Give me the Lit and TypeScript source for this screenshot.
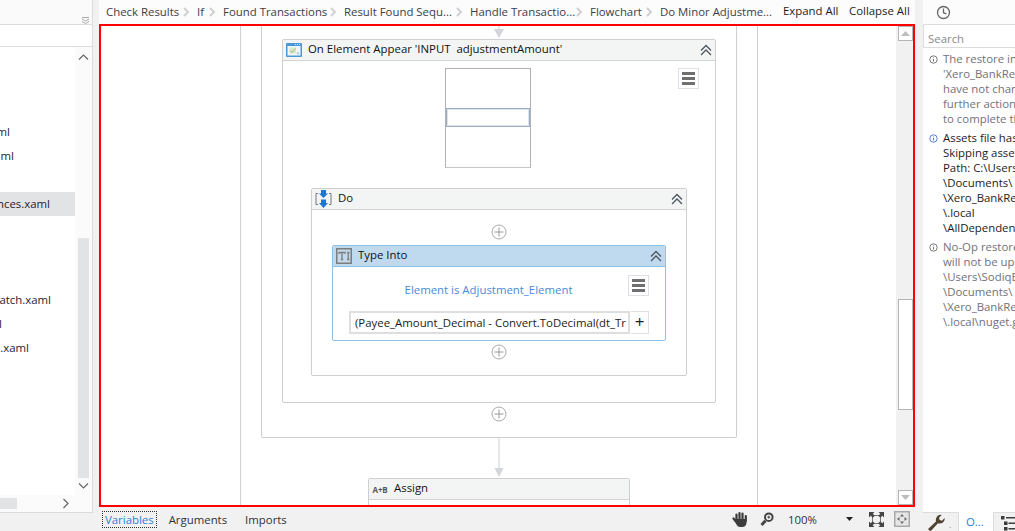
import { LitElement, html, css, svg } from 'lit';
import { customElement } from 'lit/decorators.js';

const crumbs = [
  ['Check Results', 106],
  ['If', 197],
  ['Found Transactions', 223],
  ['Result Found Sequ...', 344],
  ['Handle Transactio...', 470],
  ['Flowchart', 590],
  ['Do Minor Adjustme...', 660],
] as const;

const files = [
  { text: 'ml', end: 10, top: 0 },
  { text: 'ml', end: 14, top: 0 },
  { text: 'nces.xaml', end: 50, top: 24, selected: true },
  { text: 'atch.xaml', end: 51, top: 72 },
  { text: 'l', end: 2, top: 0 },
  { text: '.xaml', end: 29, top: 0 },
];

const messages = [
  { info: false, lines: ['The restore inputs', "'Xero_BankReconciliation'", 'have not changed', 'further actions', 'to complete the'] },
  { info: true, lines: ['Assets file has', 'Skipping assets', 'Path: C:\\Users', '\\Documents\\', '\\Xero_BankReconciliation', '\\.local', '\\AllDependencies'] },
  { info: false, lines: ['No-Op restore', 'will not be updated', '\\Users\\SodiqB', '\\Documents\\', '\\Xero_BankReconciliation', '\\.local\\nuget.g'] },
];

const collapse = svg`<svg class="chev" width="14" height="12" viewBox="0 0 14 12" fill="none" stroke="#4d5560" stroke-width="1.3"><path d="M2 6.5 7 1.5l5 5M2 11l5-5 5 5"/></svg>`;

const addBtn = html`<svg class="add" width="16" height="16" viewBox="0 0 16 16" fill="#fff" stroke="#a9a9a9"><circle cx="8" cy="8" r="7"/><path d="M8 3.5v9M3.5 8h9" stroke="#9a9a9a"/></svg>`;

const menuBtn = html`<div class="menu"><i></i><i></i><i></i></div>`;

@customElement('app-root')
export class AppRoot extends LitElement {
  static styles = css`
    :host {
      display: block;
      width: 1015px;
      height: 531px;
      overflow: hidden;
      font-family: 'Open Sans', 'Noto Sans', sans-serif;
      font-size: 11.4px;
      color: #1c1c1c;
      background: #f1f1f1;
    }
    .app {
      display: flex;
      height: 531px;
    }

    /* left project panel */
    .left {
      width: 92px;
      height: 512px;
      flex: none;
      background: #fff;
      border-right: 1px solid #dcdcdc;
      border-bottom: 1px solid #dcdcdc;
      display: flex;
      flex-direction: column;
      margin-right: 6px;
    }
    .left-top {
      height: 25px;
      box-sizing: border-box;
      background: #fafafa;
      border-bottom: 1px solid #dcdcdc;
      display: flex;
      justify-content: flex-end;
      padding: 17px 3px 0 0;
    }
    .left-search {
      height: 22px;
      box-sizing: border-box;
      border-bottom: 1px solid #dcdcdc;
    }
    .left-main {
      flex: 1;
      display: flex;
      min-height: 0;
    }
    .tree {
      width: 75px;
      padding-top: 73px;
      overflow: hidden;
    }
    .file {
      height: 24px;
      line-height: 24px;
      white-space: nowrap;
      display: flex;
      justify-content: flex-end;
      color: #1d2430;
    }
    .file.selected {
      background: #e2e3e5;
    }
    .vscroll {
      width: 17px;
      background: #fbfbfb;
      display: flex;
      flex-direction: column;
      align-items: center;
      padding-top: 7px;
      box-sizing: border-box;
    }
    .vscroll .thumb {
      width: 11px;
      height: 240px;
      margin: 178px 0 5px;
      background: #e2e3e5;
    }
    .hscroll {
      height: 17px;
      display: flex;
      align-items: center;
      justify-content: space-between;
      background: #fbfbfb;
      padding-right: 23px;
    }
    .hscroll .thumb {
      width: 17px;
      height: 11px;
      background: #e2e3e5;
    }

    /* centre */
    .center {
      width: 816px;
      flex: none;
      display: flex;
      flex-direction: column;
    }
    .crumbs {
      height: 24px;
      position: relative;
      background: #fcfcfc;
      color: #3b4048;
    }
    .crumb {
      position: absolute;
      top: 3px;
      line-height: 18px;
      white-space: nowrap;
    }
    .sep {
      position: absolute;
      top: 7px;
    }
    .crumb.act {
      top: 2px;
      color: #1c1c1c;
    }
    .canvas {
      height: 483px;
      box-sizing: border-box;
      border: 2px solid #f00;
      background: #fff;
      display: flex;
      overflow: hidden;
    }
    .flow {
      flex: 1;
      padding-left: 139px;
      min-width: 0;
    }
    .sequence {
      width: 518px;
      height: 100%;
      box-sizing: border-box;
      border-left: 1px solid #cfd0d4;
      border-right: 1px solid #cfd0d4;
      display: flex;
      flex-direction: column;
      align-items: center;
    }
    .flowchart {
      width: 476px;
      box-sizing: border-box;
      border: 1px solid #cfcfcf;
      border-top: none;
      border-radius: 0 0 2px 2px;
      display: flex;
      flex-direction: column;
      align-items: center;
      height: 412px;
      flex: none;
    }
    .arrow-short {
      height: 13px;
      flex: none;
      display: block;
    }
    .card {
      box-sizing: border-box;
      border: 1px solid #cfcfcf;
      border-radius: 2px;
      background: #fff;
      flex: none;
    }
    .head {
      height: 21px;
      box-sizing: border-box;
      background: #f3f5f4;
      border-bottom: 1px solid #d4d4d4;
      display: flex;
      align-items: center;
      gap: 6px;
      padding: 0 3px;
      white-space: pre;
      color: #111;
    }
    .head .title {
      padding-bottom: 4px;
    }
    .head .chev {
      margin-left: auto;
      margin-right: -1px;
    }
    .appear {
      width: 434px;
      height: 364px;
    }
    .appear-body {
      display: flex;
      align-items: flex-start;
      padding: 7px 16px 0 162px;
    }
    .target {
      width: 86px;
      height: 100px;
      box-sizing: border-box;
      border: 1px solid #b0b0b0;
      border-bottom-color: #c8c8c8;
      padding-top: 39px;
    }
    .target div {
      height: 19px;
      box-sizing: border-box;
      border: 1px solid #9ab0c8;
      outline: 1px solid #dde3ea;
      outline-offset: -2px;
    }
    .menu {
      width: 21px;
      height: 21px;
      box-sizing: border-box;
      border: 1px solid #dcdfe6;
      display: flex;
      flex-direction: column;
      justify-content: center;
      gap: 2px;
      padding: 0 3px;
      margin-left: auto;
      background: #fff;
    }
    .menu i {
      display: block;
      height: 3px;
      background: #6f6f6f;
    }
    .do {
      width: 376px;
      height: 188px;
      margin: 20px 0 0 28px;
      display: flex;
      flex-direction: column;
    }
    .do-body {
      display: flex;
      flex-direction: column;
      align-items: center;
      padding-top: 14px;
    }
    .add {
      display: block;
      flex: none;
    }
    .type {
      width: 334px;
      height: 96px;
      margin-top: 5px;
      border-color: #8fc1e6;
      margin-bottom: 3px;
    }
    .type .head {
      background: #bfdaee;
      border-bottom-color: #8fc1e6;
    }
    .type-row {
      display: flex;
      padding: 8px 16px 0 0;
      height: 28px;
      align-items: flex-start;
    }
    .link {
      flex: 1;
      text-align: center;
      padding: 7px 0 0 16px;
      box-sizing: border-box;
      color: #4a8ad8;
      line-height: 16px;
    }
    .expr {
      display: flex;
      margin: 8px 16px 0;
      height: 23px;
    }
    .expr .field {
      flex: 1;
      min-width: 0;
      box-sizing: border-box;
      border: 2px solid #dedede;
      padding: 0 4px;
      line-height: 19px;
      white-space: nowrap;
      overflow: hidden;
    }
    .expr .plus {
      width: 18px;
      box-sizing: border-box;
      border: 1px solid #dcdfe6;
      border-left: none;
      margin-left: 1px;
      text-align: center;
      font-size: 17px;
      line-height: 19px;
    }
    .after {
      height: 40px;
      flex: none;
      display: block;
    }
    .assign {
      width: 262px;
      height: 40px;
    }
    .ab {
      font-size: 8px;
      font-weight: 700;
      color: #555;
      width: 16px;
      text-align: center;
      letter-spacing: -0.2px;
    }
    .cscroll {
      width: 17px;
      flex: none;
      background: #f1f1f1;
      display: flex;
      flex-direction: column;
      box-sizing: border-box;
      padding-left: 2px;
    }
    .cscroll .btn {
      width: 15px;
      height: 15px;
      box-sizing: border-box;
      background: #fff;
      border: 1px solid #b5b5b5;
      display: flex;
      align-items: center;
      justify-content: center;
      flex: none;
    }
    .cscroll .thumb {
      width: 15px;
      height: 111px;
      box-sizing: border-box;
      background: #fff;
      border: 1px solid #b5b5b5;
      margin: 258px 0 80px;
      flex: none;
    }
    .bottom {
      height: 24px;
      display: flex;
      align-items: center;
      padding: 0 3px;
      color: #2b3340;
    }
    .tab {
      margin-right: 12px;
      padding: 0 3px;
      line-height: 15px;
    }
    .tab.on {
      color: #2e7fd6;
      border: 1px dotted #333;
      padding: 0 2px;
      margin-right: 9px;
    }
    .tools {
      margin-left: auto;
      display: flex;
      align-items: center;
      padding-right: 2px;
    }
    .zoom {
      width: 58px;
      margin-left: 14px;
      color: #333;
    }
    .icon-gap {
      margin-left: 12px;
    }
    .fit-gap {
      margin-left: 10px;
    }
    .drop {
      margin-right: 16px;
    }

    /* right panel */
    .right {
      width: 92px;
      flex: none;
      margin-left: 8px;
      background: #fff;
      display: flex;
      flex-direction: column;
      height: 531px;
      overflow: hidden;
    }
    .right-top {
      height: 25px;
      flex: none;
      box-sizing: border-box;
      background: #fcfcfc;
      border-bottom: 1px solid #dcdcdc;
      padding: 5px 0 0 13px;
    }
    .search {
      height: 23px;
      flex: none;
      box-sizing: border-box;
      border-left: 1px solid #dcdcdc;
      border-bottom: 1px solid #dcdcdc;
      padding-left: 4px;
      line-height: 28px;
      color: #8a8a8a;
    }
    .msgs {
      flex: 1;
      padding-top: 3px;
      min-height: 0;
    }
    .msg {
      display: flex;
      margin-bottom: 4px;
    }
    .msg svg {
      flex: none;
      margin: 4px 5px 0 6px;
    }
    .msg .line {
      line-height: 15px;
      white-space: nowrap;
    }
    .msg.dim {
      color: #71717a;
    }
    .rtabs {
      height: 19px;
      flex: none;
      background: #f1f1f1;
      display: flex;
    }
    .rtab {
      height: 19px;
      box-sizing: border-box;
      display: flex;
      align-items: center;
      flex: none;
      border-top: 1px solid #dcdcdc;
      border-right: 1px solid #dcdcdc;
    }
    .rtab.wrench {
      width: 36px;
      padding-left: 5px;
    }
    .rtab.wrench span {
      color: #9a9270;
      font-size: 9px;
      margin: 4px 0 0 4px;
    }
    .rtab.o {
      width: 35px;
      padding-left: 7px;
      background: #fff;
      border-top: none;
      color: #2e7fd6;
    }
    .rtab.list {
      width: 21px;
      padding: 2px 0 0 7px;
      border-right: none;
    }
  `;

  private sep(x: number) {
    return html`<svg class="sep" style="left:${x}px" width="7" height="10" viewBox="0 0 7 10" fill="none" stroke="#d0d0d0" stroke-width="2"><path d="M1 1l4 4-4 4"/></svg>`;
  }

  private info(blue: boolean) {
    const c = blue ? '#5b7fd6' : '#7a7a7a';
    return html`<svg width="9" height="9" viewBox="0 0 9 9" fill="none" stroke=${c}><circle cx="4.5" cy="4.5" r="3.7"/><path d="M4.5 2.5v.8M4.5 4v2.5"/></svg>`;
  }

  render() {
    return html`
      <div class="app">
        <div class="left">
          <div class="left-top">
            <svg width="7" height="7" viewBox="0 0 7 7" fill="none" stroke="#aaa"><path d="M0 .5h7M0 2l3.5 2L7 2M0 4.5l3.5 2 3.500-2"/></svg>
          </div>
          <div class="left-search"></div>
          <div class="left-main">
            <div class="tree">
              ${files.map(
                (f) => html`<div
                  class="file ${f.selected ? 'selected' : ''}"
                  style="margin-top:${f.top}px;padding-right:${75 - f.end}px"
                >${f.text}</div>`
              )}
            </div>
            <div class="vscroll">
              <svg width="11" height="6" viewBox="0 0 11 6" fill="none" stroke="#666" stroke-width="1.2"><path d="M1 5.5l4.5-4.5 4.5 4.5"/></svg>
              <div class="thumb"></div>
              <svg width="11" height="6" viewBox="0 0 11 6" fill="none" stroke="#666" stroke-width="1.2"><path d="M1 .5l4.5 4.5 4.5-4.5"/></svg>
            </div>
          </div>
          <div class="hscroll">
            <div class="thumb"></div>
            <svg width="6" height="11" viewBox="0 0 6 11" fill="none" stroke="#666" stroke-width="1.2"><path d="M.5 1l4.500 4.500-4.500 4.500"/></svg>
          </div>
        </div>

        <div class="center">
          <div class="crumbs">
            ${crumbs.map(
              ([label, x], i) => html`
                <span class="crumb" style="left:${x - 99}px">${label}</span>
                ${i < crumbs.length - 1 ? this.sep(crumbs[i + 1][1] - 99 - 14) : ''}
              `
            )}
            <span class="crumb act" style="left:684px">Expand All</span>
            <span class="crumb act" style="left:750px">Collapse All</span>
          </div>

          <div class="canvas">
            <div class="flow">
              <div class="sequence">
                <div class="flowchart">
                  <svg class="arrow-short" width="12" height="13" viewBox="0 0 12 13"><path d="M6 0v4" stroke="#cfcfcf"/><path d="M1 3h10l-5 9z" fill="#d4d5d8"/></svg>
                  <div class="card appear">
                    <div class="head">
                      <svg width="16" height="14" viewBox="0 0 16 14">
                        <rect width="16" height="14" rx="1" fill="#4a98d6"/>
                        <rect x="1.5" y="3" width="13" height="9.500" fill="#f2f6fa"/>
                        <path d="M9 1.500h1M11 1.500h1M13 1.500h1" stroke="#cfe4f5"/>
                        <path d="M3.500 4.500h6.500v6H3.500z" fill="#dbe8cf"/>
                        <path d="M4.500 7.500l1.500 2 3.500-4" fill="none" stroke="#8fbf6a"/>
                        <path d="M12 9v2.500M10.800 10.300h2.400" stroke="#a5bfd4"/>
                      </svg>
                      <span class="title">On Element Appear 'INPUT  adjustmentAmount'</span>
                      ${collapse}
                    </div>
                    <div class="appear-body">
                      <div class="target"><div></div></div>
                      ${menuBtn}
                    </div>
                    <div class="do card">
                      <div class="head">
                        <svg width="17" height="18" viewBox="0 0 17 18">
                          <path d="M3 3.500H1v11h2M14 3.500h2v11h-2" fill="none" stroke="#777"/>
                          <path d="M6 0h5v3.500h2l-4.500 4.500-4.500-4.500h2zM6 9.500h5v3.500h2l-4.500 5-4.500-5h2z" fill="#1f78cf"/>
                        </svg>
                        <span class="title">Do</span>
                        ${collapse}
                      </div>
                      <div class="do-body">
                        ${addBtn}
                        <div class="type card">
                          <div class="head">
                            <svg width="16" height="16" viewBox="0 0 16 16" fill="none" stroke="#7d7d7d">
                              <rect x=".75" y=".75" width="14.500" height="14.500" stroke-width="1.5"/>
                              <path d="M3 6V4.500h6V6M6 4.500v7M4.800 11.500h2.400M11 4.500h2.500M12.200 4.500v7M11 11.500h2.500" stroke-width="1.3"/>
                            </svg>
                            <span class="title">Type Into</span>
                            ${collapse}
                          </div>
                          <div class="type-row">
                            <div class="link">Element is Adjustment_Element</div>
                            ${menuBtn}
                          </div>
                          <div class="expr">
                            <div class="field">(Payee_Amount_Decimal - Convert.ToDecimal(dt_Tr</div>
                            <div class="plus">+</div>
                          </div>
                        </div>
                        ${addBtn}
                      </div>
                    </div>
                  </div>
                  <div style="height:3px"></div>
                  ${addBtn}
                </div>
                <svg class="after" width="12" height="40" viewBox="0 0 12 40"><path d="M6 0v32" stroke="#cfcfcf"/><path d="M1.5 30h9L6 39z" fill="#d4d5d8"/></svg>
                <div class="card assign">
                  <div class="head"><span class="ab">A+B</span><span class="title">Assign</span></div>
                </div>
              </div>
            </div>
            <div class="cscroll">
              <div class="btn"><svg width="9" height="5" viewBox="0 0 9 5"><path d="M0 5l4.5-5L9 5z" fill="#bdbdbd"/></svg></div>
              <div class="thumb"></div>
              <div class="btn"><svg width="9" height="5" viewBox="0 0 9 5"><path d="M0 0l4.5 5L9 0z" fill="#bdbdbd"/></svg></div>
            </div>
          </div>

          <div class="bottom">
            <span class="tab on">Variables</span>
            <span class="tab">Arguments</span>
            <span class="tab">Imports</span>
            <div class="tools">
              <svg width="16" height="17" viewBox="0 0 16 17" fill="#3c3c3c" stroke="#3c3c3c" stroke-linecap="round" stroke-width="2.200"><path d="M1.500 7.500 5 12M4.500 9V3.500M7.500 9V2M10.500 9V2.500M13.800 10V5" fill="none"/><path d="M4 8h10.500v3.500c0 3-2 4.500-4.500 4.500H8c-1.500 0-3-1-3.500-2.500z" stroke="none"/></svg>
              <svg class="icon-gap" width="14" height="15" viewBox="0 0 14 15" fill="none" stroke="#444"><circle cx="8.800" cy="5.200" r="3.800" stroke-width="2"/><path d="M5.500 8.800 1.500 13" stroke-width="3"/><path d="M7.300 5.200h3M8.800 3.700v3"/></svg>
              <span class="zoom">100%</span>
              <svg class="drop" width="7" height="4" viewBox="0 0 7 4"><path d="M0 0h7L3.500 4z" fill="#222"/></svg>
              <svg width="15" height="15" viewBox="0 0 15 15" fill="#444"><path d="M3.500 3.500h8v8h-8z" fill="none" stroke="#777"/><path d="M0 0h5.500L3.800 1.700l2 2-2 2-2-2L0 5.500zM15 0v5.500l-1.700-1.700-2 2-2-2 2-2L9.500 0zM15 15H9.500l1.700-1.700-2-2 2-2 2 2 1.800-1.800zM0 15V9.500l1.700 1.800 2-2 2 2-2 2L5.500 15z"/></svg>
              <svg class="fit-gap" width="16" height="16" viewBox="0 0 16 16"><rect width="16" height="16" fill="#a9a9a9"/><rect x="1.500" y="1.500" width="13" height="13" fill="#e6e6e6"/><path d="M8 3l2 2.500H6zM8 13l2-2.500H6zM3 8l2.500-2v4zM13 8l-2.500-2v4z" fill="#666"/></svg>
            </div>
          </div>
        </div>

        <div class="right">
          <div class="right-top">
            <svg width="15" height="15" viewBox="0 0 15 15" fill="none" stroke="#666" stroke-width="1.3"><circle cx="7.500" cy="7.500" r="6"/><path d="M7.500 3.500v4.200l3 1.300"/></svg>
          </div>
          <div class="search">Search</div>
          <div class="msgs">
            ${messages.map(
              (m) => html`<div class="msg ${m.info ? '' : 'dim'}">
                ${this.info(m.info)}
                <div>${m.lines.map((l) => html`<div class="line">${l}</div>`)}</div>
              </div>`
            )}
          </div>
          <div class="rtabs">
            <div class="rtab wrench">
              <svg width="17" height="17" viewBox="0 0 17 17" fill="#4f4230"><path d="M0.500 14.500 8 7.500C7.200 4.500 9 1.200 12.500.8l1.200.2-2.700 2.800.7 2.300 2.300.7L16.500 4l.2 1.200c-.5 3.400-3.800 5-6.700 4.100L3 16.800c-1 .6-3.300-1-2.500-2.300z"/></svg>
              <span>.</span>
            </div>
            <div class="rtab o">O...</div>
            <div class="rtab list">
              <svg width="14" height="15" viewBox="0 0 14 15" fill="#3d3d3d"><path d="M0 0h3.500v3.500H0zM5 1h9v1.500H5zM3 5.500h3.500V9H3zM7.500 6.500H14V8H7.500zM3 11h3.500v3.500H3zM7.500 12H14v1.500H7.500z"/></svg>
            </div>
          </div>
        </div>
      </div>
    `;
  }
}
